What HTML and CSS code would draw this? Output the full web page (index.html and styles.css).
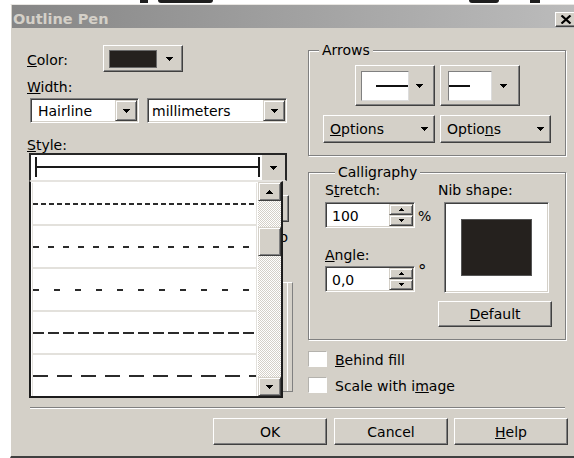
FILE: index.html
```html
<!DOCTYPE html>
<html lang="en">
<head>
<meta charset="utf-8">
<title>Outline Pen</title>
<link rel="stylesheet" href="styles.css">
</head>
<body>
<div class="backdrop">
  <span class="blot blot-a"></span>
  <span class="blot blot-b"></span>
  <span class="blot blot-c"></span>
  <span class="blot blot-d"></span>
</div>

<div class="dialog">
  <div class="titlebar">
    <span class="title">Outline Pen</span>
    <button class="close" type="button" aria-label="Close">
      <svg width="12" height="9" viewBox="0 0 12 9"><path d="M1.5 0.5 L10.5 8.5 M10.5 0.5 L1.5 8.5" stroke="#000" stroke-width="2.2" fill="none"/></svg>
    </button>
  </div>

  <div class="content">
    <!-- pen colour, width and dash style -->
    <div class="col-left">
      <div class="color-row">
        <span class="lbl color-lbl"><u>C</u>olor:</span>
        <button class="btn color-btn" type="button">
          <span class="swatch"></span>
          <svg class="tri" width="7" height="4" viewBox="0 0 7 4"><path d="M0 0h7v1h-1v1h-1v1h-1v1h-1v-1h-1v-1h-1v-1h-1z"/></svg>
        </button>
      </div>

      <div class="lbl width-lbl"><u>W</u>idth:</div>
      <div class="width-row">
        <div class="combo hairline">
          <span class="val">Hairline</span>
          <span class="drop"><svg class="tri" width="7" height="4" viewBox="0 0 7 4"><path d="M0 0h7v1h-1v1h-1v1h-1v1h-1v-1h-1v-1h-1v-1h-1z"/></svg></span>
        </div>
        <div class="combo units">
          <span class="val">millimeters</span>
          <span class="drop"><svg class="tri" width="7" height="4" viewBox="0 0 7 4"><path d="M0 0h7v1h-1v1h-1v1h-1v1h-1v-1h-1v-1h-1v-1h-1z"/></svg></span>
        </div>
      </div>

      <div class="lbl style-lbl"><u>S</u>tyle:</div>
      <div class="style-wrap">
        <div class="style-combo">
          <div class="style-field"><span class="style-preview"></span></div>
          <span class="style-drop"><svg class="tri" width="7" height="4" viewBox="0 0 7 4"><path d="M0 0h7v1h-1v1h-1v1h-1v1h-1v-1h-1v-1h-1v-1h-1z"/></svg></span>
        </div>

        <!-- controls that sit behind the open style list -->
        <div class="btn ghost-btn"></div>
        <div class="ghost-deg">o</div>
        <div class="ghost-frame"></div>

        <!-- open style list -->
        <div class="popup">
          <div class="rows">
            <div class="row"><svg class="dash" width="100%" height="2"><line x1="0" y1="1" x2="100%" y2="1" stroke-dasharray="5 3"/></svg></div>
            <div class="row"><svg class="dash" width="100%" height="2"><line x1="0" y1="1" x2="100%" y2="1" stroke-dasharray="6 9"/></svg></div>
            <div class="row"><svg class="dash" width="100%" height="2"><line x1="0" y1="1" x2="100%" y2="1" stroke-dasharray="6 15"/></svg></div>
            <div class="row"><svg class="dash" width="100%" height="2"><line x1="0" y1="1" x2="100%" y2="1" stroke-dasharray="11 4"/></svg></div>
            <div class="row"><svg class="dash" width="100%" height="2"><line x1="0" y1="1" x2="100%" y2="1" stroke-dasharray="15 9"/></svg></div>
          </div>
          <div class="scrollbar">
            <span class="sb-btn"><svg width="7" height="4" viewBox="0 0 7 4"><path d="M3 0h1v1h1v1h1v1h1v1h-7v-1h1v-1h1v-1h1z"/></svg></span>
            <div class="sb-track"><span class="sb-thumb"></span></div>
            <span class="sb-btn"><svg width="7" height="4" viewBox="0 0 7 4"><path d="M0 0h7v1h-1v1h-1v1h-1v1h-1v-1h-1v-1h-1v-1h-1z"/></svg></span>
          </div>
        </div>
      </div>
    </div>

    <!-- arrowheads, calligraphy and options -->
    <div class="col-right">
      <fieldset class="group arrows">
        <legend>Arrows</legend>
        <div class="arrow-row">
          <button class="btn arrow-btn" type="button">
            <span class="arrow-box start"></span>
            <svg class="tri" width="7" height="4" viewBox="0 0 7 4"><path d="M0 0h7v1h-1v1h-1v1h-1v1h-1v-1h-1v-1h-1v-1h-1z"/></svg>
          </button>
          <button class="btn arrow-btn end-btn" type="button">
            <span class="arrow-box end"></span>
            <svg class="tri" width="7" height="4" viewBox="0 0 7 4"><path d="M0 0h7v1h-1v1h-1v1h-1v1h-1v-1h-1v-1h-1v-1h-1z"/></svg>
          </button>
        </div>
        <div class="options-row">
          <button class="btn opt-btn" type="button"><span><u>O</u>ptions</span><svg class="tri" width="7" height="4" viewBox="0 0 7 4"><path d="M0 0h7v1h-1v1h-1v1h-1v1h-1v-1h-1v-1h-1v-1h-1z"/></svg></button>
          <button class="btn opt-btn opt-2" type="button"><span>Optio<u>n</u>s</span><svg class="tri" width="7" height="4" viewBox="0 0 7 4"><path d="M0 0h7v1h-1v1h-1v1h-1v1h-1v-1h-1v-1h-1v-1h-1z"/></svg></button>
        </div>
      </fieldset>

      <fieldset class="group calli">
        <legend>Calligraphy</legend>
        <div class="calli-body">
          <div class="calli-left">
            <div class="lbl">S<u>t</u>retch:</div>
            <div class="spin-row">
              <div class="spin">
                <span class="spin-val">100</span>
                <span class="spin-btns">
                  <span class="spin-btn"><svg width="5" height="3" viewBox="0 0 5 3"><path d="M2 0h1v1h1v1h1v1h-5v-1h1v-1h1z"/></svg></span>
                  <span class="spin-btn"><svg width="5" height="3" viewBox="0 0 5 3"><path d="M0 0h5v1h-1v1h-1v1h-1v-1h-1v-1h-1z"/></svg></span>
                </span>
              </div>
              <span class="unit pct">%</span>
            </div>
            <div class="lbl angle-lbl"><u>A</u>ngle:</div>
            <div class="spin-row angle-row">
              <div class="spin">
                <span class="spin-val">0,0</span>
                <span class="spin-btns">
                  <span class="spin-btn"><svg width="5" height="3" viewBox="0 0 5 3"><path d="M2 0h1v1h1v1h1v1h-5v-1h1v-1h1z"/></svg></span>
                  <span class="spin-btn"><svg width="5" height="3" viewBox="0 0 5 3"><path d="M0 0h5v1h-1v1h-1v1h-1v-1h-1v-1h-1z"/></svg></span>
                </span>
              </div>
              <span class="unit deg">°</span>
            </div>
          </div>
          <div class="calli-right">
            <div class="lbl">Nib shape:</div>
            <div class="nib"><span class="nib-square"></span></div>
            <button class="btn default-btn" type="button"><u>D</u>efault</button>
          </div>
        </div>
      </fieldset>

      <label class="check-row first"><span class="check"></span><span><u>B</u>ehind fill</span></label>
      <label class="check-row"><span class="check"></span><span>Scale with i<u>m</u>age</span></label>
    </div>
  </div>

  <div class="separator"></div>

  <div class="actions">
    <button class="btn action" type="button">OK</button>
    <button class="btn action cancel" type="button">Cancel</button>
    <button class="btn action help" type="button"><u>H</u>elp</button>
  </div>
</div>
</body>
</html>
```

FILE: styles.css
```css
* { box-sizing: border-box; }

html, body {
  margin: 0;
  padding: 0;
}

body {
  width: 574px;
  height: 458px;
  overflow: hidden;
  background: #fff;
  font-family: "DejaVu Sans", Verdana, sans-serif;
  font-size: 14px;
  line-height: 16px;
  color: #000;
}

u { text-decoration: underline; text-underline-offset: 1px; }

svg path { fill: #000; }

/* bits of the window behind the dialog */
.backdrop { display: flex; height: 4px; }
.blot { height: 3px; background: #1e1e1e; }
.blot-a { margin-left: 140px; width: 8px; }
.blot-b { margin-left: 10px; width: 55px; border-radius: 0 0 12px 12px; }
.blot-c { margin-left: 256px; width: 30px; border-radius: 0 0 8px 8px; }
.blot-d { margin-left: 31px; width: 10px; }

/* dialog frame */
.dialog {
  margin-left: 10px;
  width: 570px;
  background: #d4d0c8;
  border-top: 1px solid #e8e6e2;
  border-left: 1px solid #fff;
  border-bottom: 2px solid #404040;
  padding: 0 1px 11px 1px;
}

.titlebar {
  display: flex;
  height: 23px;
  background: linear-gradient(to right, #868686, #bcbcbc);
}

.title {
  align-self: flex-end;
  padding-left: 1px;
  font-weight: bold;
  font-size: 14.5px;
  line-height: 17px;
  color: #d4d0c8;
}

.close {
  align-self: flex-end;
  margin: 0 2px 1px auto;
  width: 22px;
  height: 15px;
  padding: 0;
  background: #d4d0c8;
  border: 1px solid;
  border-color: #fff #404040 #404040 #fff;
  box-shadow: inset -1px -1px 0 #808080;
  display: flex;
  align-items: center;
  justify-content: center;
}

/* generic raised button */
.btn {
  background: #d4d0c8;
  border: 1px solid;
  border-color: #fff #404040 #404040 #fff;
  box-shadow: inset -1px -1px 0 #808080;
  font: inherit;
  color: #000;
  padding: 0;
  display: flex;
  align-items: center;
  justify-content: center;
}

.lbl { display: block; height: 16px; white-space: nowrap; }

.content {
  display: grid;
  grid-template-columns: 266px 258px;
  column-gap: 15px;
  align-items: start;
  padding: 14px 0 0 15px;
}

/* left column */
.col-left { margin-top: 3px; }

.color-row { display: flex; align-items: center; height: 27px; }
.color-lbl { width: 76px; height: 19px; padding-top: 3px; }

.color-btn {
  width: 80px;
  height: 27px;
  justify-content: flex-start;
  padding-left: 5px;
}
.swatch {
  width: 48px;
  height: 18px;
  background: #25211e;
  border: 1px solid #6a6a6a;
}
.color-btn .tri { margin-left: 9px; }

.width-lbl { margin-top: 7px; }
.width-row { display: flex; margin-top: 3px; height: 25px; }

.combo {
  display: flex;
  align-items: center;
  height: 25px;
  padding: 1px;
  background: #fff;
  border: 1px solid;
  border-color: #808080 #fff #fff #808080;
  box-shadow: inset 1px 1px 0 #404040, inset -1px -1px 0 #d4d0c8;
}
.combo .val { flex: 1; white-space: nowrap; }
.hairline { margin-left: 3px; width: 109px; }
.hairline .val { padding-left: 6px; }
.units { margin-left: 8px; width: 140px; }
.units .val { padding-left: 3px; }

.drop {
  width: 22px;
  height: 21px;
  display: flex;
  align-items: center;
  justify-content: center;
  background: #d4d0c8;
  border: 1px solid;
  border-color: #d4d0c8 #404040 #404040 #d4d0c8;
  box-shadow: inset 1px 1px 0 #fff, inset -1px -1px 0 #808080;
}

.style-lbl { margin-top: 14px; }

.style-wrap {
  position: relative;
  margin-left: 2px;
  width: 264px;
}

.style-combo {
  display: flex;
  width: 258px;
  height: 28px;
  background: #fff;
  border-top: 2px solid #262626;
  border-left: 2px solid #262626;
  border-right: 2px solid #262626;
  border-bottom: 1px solid #e6e4e0;
}
.style-field { width: 231px; padding: 2px 0 0 4px; }
.style-preview {
  display: block;
  width: 225px;
  height: 20px;
  border-left: 2px solid #1a1a1a;
  border-right: 2px solid #1a1a1a;
  background: linear-gradient(#1a1a1a, #1a1a1a) center / 100% 2px no-repeat;
}
.style-drop {
  flex: 1;
  background: #d4d0c8;
  display: flex;
  align-items: center;
  justify-content: center;
}

.ghost-btn {
  margin: 14px 4px 0 auto;
  width: 89px;
  height: 27px;
}
.ghost-deg {
  margin-top: 7px;
  text-align: right;
  padding-right: 5px;
}
.ghost-frame {
  margin: 37px 0 0 auto;
  width: 100px;
  height: 110px;
  border: 1px solid;
  border-color: #fff #808080 #808080 #fff;
  box-shadow: inset -4px 0 0 #d4d0c8, inset -5px 0 0 #fff;
}

.popup {
  position: absolute;
  left: 0;
  top: 28px;
  z-index: 2;
  width: 254px;
  height: 217px;
  display: flex;
  background: #fff;
  border-top: 1px solid #e6e4e0;
  border-left: 2px solid #1c1c1c;
  border-right: 2px solid #1c1c1c;
  border-bottom: 2px solid #1c1c1c;
}

.rows {
  width: 227px;
  padding: 1px 1px 0 1px;
  overflow: hidden;
}
.row {
  height: 43px;
  padding-top: 20px;
  border-left: 1px solid #e3e1dc;
  border-right: 1px solid #e3e1dc;
  border-bottom: 2px solid #e3e1dc;
}
.dash { display: block; }
.dash line { stroke: #2b2b2b; stroke-width: 2; }

.scrollbar {
  flex: 1;
  display: flex;
  flex-direction: column;
}
.sb-btn {
  height: 19px;
  display: flex;
  align-items: center;
  justify-content: center;
  background: #d4d0c8;
  border: 1px solid;
  border-color: #d4d0c8 #404040 #404040 #d4d0c8;
  box-shadow: inset 1px 1px 0 #fff, inset -1px -1px 0 #808080;
}
.sb-track {
  flex: 1;
  background: repeating-conic-gradient(#d4d0c8 0 25%, #fff 0 50%) 0 0 / 2px 2px;
}
.sb-thumb {
  display: block;
  margin-top: 26px;
  height: 29px;
  background: #d4d0c8;
  border: 1px solid;
  border-color: #d4d0c8 #404040 #404040 #d4d0c8;
  box-shadow: inset 1px 1px 0 #fff, inset -1px -1px 0 #808080;
}

/* right column */
.group {
  margin: 0;
  min-width: 0;
  width: 258px;
  border: 1px solid #808080;
  box-shadow: inset 1px 1px 0 #fff, 1px 1px 0 #fff;
}
.group legend {
  margin-left: 10px;
  padding: 0 3px;
  line-height: 16px;
  background: #d4d0c8;
}

.arrows { padding: 7px 0 12px; }

.arrow-row, .options-row {
  display: flex;
  justify-content: center;
  gap: 5px;
}
.arrow-btn {
  width: 80px;
  height: 41px;
  justify-content: flex-start;
  padding-left: 5px;
}
.arrow-box {
  width: 48px;
  height: 30px;
  border: 1px solid;
  border-color: #808080 #dcdcdc #dcdcdc #808080;
  background: #fff linear-gradient(#111, #111) right center / 32px 2px no-repeat;
}
.arrow-btn .tri { margin-left: 7px; }
.end-btn { padding-left: 7px; }
.arrow-box.end {
  width: 44px;
  background: #fff linear-gradient(#111, #111) left center / 21px 2px no-repeat;
}
.end-btn .tri { margin-left: 8px; }

.options-row { margin-top: 9px; }
.opt-btn {
  width: 112px;
  height: 28px;
  justify-content: space-between;
  padding: 0 6px;
}
.opt-2 { width: 111px; }

.calli {
  margin-top: 8px;
  padding: 2px 12px 12px 16px;
}
.calli-body {
  display: grid;
  grid-template-columns: 113px 1fr;
}

.spin-row { display: flex; margin-top: 4px; height: 26px; }
.spin {
  width: 90px;
  height: 26px;
  display: flex;
  padding: 1px;
  background: #fff;
  border: 1px solid;
  border-color: #808080 #fff #fff #808080;
  box-shadow: inset 1px 1px 0 #404040, inset -1px -1px 0 #d4d0c8;
}
.spin-val { flex: 1; padding: 4px 0 0 5px; }
.spin-btns { width: 24px; display: flex; flex-direction: column; }
.spin-btn {
  flex: 1;
  display: flex;
  align-items: center;
  justify-content: center;
  background: #d4d0c8;
  border: 1px solid;
  border-color: #d4d0c8 #404040 #404040 #d4d0c8;
  box-shadow: inset 1px 1px 0 #fff, inset -1px -1px 0 #808080;
}
.unit { margin-left: 3px; }
.pct { align-self: flex-end; margin-bottom: 4px; }
.deg { align-self: flex-start; margin-top: -3px; font-size: 17px; line-height: 17px; }

.angle-lbl { margin-top: 19px; }
.angle-row { margin-top: 3px; }

.nib {
  margin: 4px 0 0 6px;
  width: 105px;
  height: 91px;
  display: flex;
  align-items: center;
  justify-content: center;
  background: #fff;
  border: 1px solid;
  border-color: #808080 #fff #fff #808080;
  box-shadow: inset 1px 1px 0 #404040, inset -1px -1px 0 #d4d0c8;
}
.nib-square {
  width: 71px;
  height: 57px;
  background: #25211e;
  border: 1px solid #555;
}
.default-btn { margin-top: 8px; width: 114px; height: 26px; }

.check-row {
  display: flex;
  align-items: center;
  height: 16px;
  margin-top: 10px;
}
.check-row.first { margin-top: 11px; }
.check {
  width: 19px;
  height: 16px;
  margin-right: 8px;
  background: #fff;
  border: 1px solid;
  border-color: #b4b2ad #fff #fff #b4b2ad;
}
.check-row span:last-child { padding-top: 2px; }

/* bottom bar */
.separator {
  margin: 14px 14px 0 18px;
  border-top: 1px solid #808080;
  border-bottom: 1px solid #fff;
}

.actions {
  display: flex;
  justify-content: flex-end;
  margin-top: 9px;
  padding-right: 11px;
}
.action { width: 114px; height: 27px; }
.cancel { margin-left: 7px; }
.help { margin-left: 6px; }
```
